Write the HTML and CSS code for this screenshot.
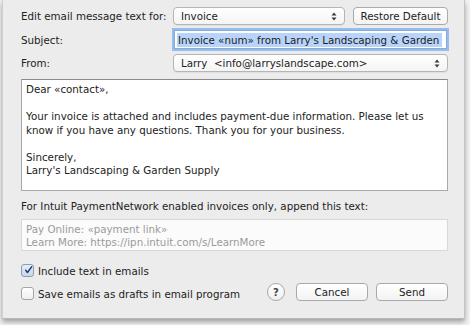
FILE: index.html
```html
<!DOCTYPE html>
<html>
<head>
<meta charset="utf-8">
<link rel="stylesheet" href="styles.css">
</head>
<body>
<div class="sheet">
  <div class="form">
    <div class="row">
      <label class="lbl">Edit email message text for:</label>
      <div class="ctl split">
        <div class="popup short"><span>Invoice</span><svg class="arrows" width="6" height="9" viewBox="0 0 6 9"><path d="M3 0.5 L5.5 3.5 H0.5 Z M3 8.5 L5.5 5.5 H0.5 Z" fill="#3a3a3a"/></svg></div>
        <div class="btn restore">Restore Default</div>
      </div>
    </div>
    <div class="row">
      <label class="lbl">Subject:</label>
      <div class="ctl"><div class="field focus"><span class="sel">Invoice «num» from Larry's Landscaping &amp; Garden</span></div></div>
    </div>
    <div class="row">
      <label class="lbl">From:</label>
      <div class="ctl"><div class="popup"><span>Larry&nbsp; &lt;info@larryslandscape.com&gt;</span><svg class="arrows" width="6" height="9" viewBox="0 0 6 9"><path d="M3 0.5 L5.5 3.5 H0.5 Z M3 8.5 L5.5 5.5 H0.5 Z" fill="#3a3a3a"/></svg></div></div>
    </div>
  </div>
  <div class="body-text">
    <p>Dear «contact»,</p>
    <p>Your invoice is attached and includes payment-due information. Please let us know if you have any questions. Thank you for your business.</p>
    <p>Sincerely,<br>Larry's Landscaping &amp; Garden Supply</p>
  </div>
  <div class="note">For Intuit PaymentNetwork enabled invoices only, append this text:</div>
  <div class="append">Pay Online: «payment link»<br>Learn More: https://ipn.intuit.com/s/LearnMore</div>
  <div class="bottom">
    <div class="checks">
      <div class="check"><span class="box on"><svg width="13" height="12" viewBox="0 0 13 12"><path d="M2.5 6.5 L5 9.5 L11 1.5" fill="none" stroke="#1d3f7a" stroke-width="2.2" stroke-linecap="round" stroke-linejoin="round"/></svg></span>Include text in emails</div>
      <div class="check"><span class="box"></span>Save emails as drafts in email program</div>
    </div>
    <div class="actions">
      <div class="help">?</div>
      <div class="btn wide">Cancel</div>
      <div class="btn wide">Send</div>
    </div>
  </div>
</div>
</body>
</html>
```
FILE: styles.css
```css
html, body { margin: 0; padding: 0; }
body {
  width: 470px; height: 325px; overflow: hidden;
  background: #f3f3f3;
  font-family: "DejaVu Sans", "Liberation Sans", sans-serif;
  font-size: 10.3px;
  color: #222;
}
.sheet {
  box-sizing: border-box;
  width: 463px; height: 319px;
  margin-left: 2px;
  background: #ececec;
  border-left: 1px solid #cfcfcf;
  border-right: 1px solid #c4c4c4;
  border-bottom: 1px solid #b8b8b8;
  box-shadow: 0 3px 5px rgba(0,0,0,0.35);
  padding: 7px 16px 0 18px;
  position: relative;
}
.form { display: flex; flex-direction: column; gap: 5px; }
.row { display: flex; align-items: center; }
.lbl { width: 152px; flex: none; }
.ctl { flex: 1; display: flex; min-width: 0; }
.split { gap: 8px; }
.popup {
  box-sizing: border-box;
  flex: 1; height: 18px;
  display: flex; align-items: center; justify-content: space-between;
  padding: 0 7px 0 7px;
  background: linear-gradient(#ffffff, #f4f4f4);
  border: 1px solid #b5b5b5;
  border-radius: 4px;
  box-shadow: 0 1px 0 rgba(0,0,0,0.05);
}
.popup.short { flex: none; width: 172px; }
.btn {
  box-sizing: border-box;
  height: 18px;
  display: flex; align-items: center; justify-content: center;
  background: linear-gradient(#ffffff, #f3f3f3);
  border: 1px solid #aaa;
  border-radius: 4px;
}
.restore { width: 96px; }
.field {
  box-sizing: border-box;
  flex: 1; height: 19px;
  min-width: 0;
  background: #fff;
  border: 1px solid #8aa9d6;
  box-shadow: 0 0 0 2px #95bdf0;
  display: flex; align-items: center;
  padding-left: 2px;
  margin: 0 1px;
  white-space: nowrap;
  overflow: hidden;
}
.sel { background: #b8d4fb; padding: 1px 3px 1px 1px; }
.body-text {
  box-sizing: border-box;
  margin-top: 7px;
  height: 112px;
  background: #fff;
  border: 1px solid #a9a9a9;
  border-top-color: #8a8a8a;
  padding: 3px 4px;
  line-height: 13.5px;
}
.body-text p { margin: 0 0 13.5px; }
.note { margin-top: 9px; }
.append {
  box-sizing: border-box;
  margin-top: 7px;
  height: 32px;
  background: #fbfbfb;
  border: 1px solid #d8d8d8;
  color: #9a9a9a;
  padding: 3px 4px;
  line-height: 13px;
}
.bottom { display: flex; justify-content: space-between; align-items: flex-end; margin-top: 13px; }
.checks { display: flex; flex-direction: column; gap: 10px; }
.check { display: flex; align-items: center; gap: 4px; }
.box {
  box-sizing: border-box;
  width: 13px; height: 13px;
  border: 1px solid #a5a5a5;
  border-radius: 3px;
  background: linear-gradient(#fff, #f0f0f0);
  display: flex; align-items: center; justify-content: center;
}
.box.on { background: linear-gradient(#e4ecf6, #c9d7ea); border-color: #8a9cb6; }
.box.on svg { margin-left: 2px; margin-top: -2px; }
.actions { display: flex; align-items: center; gap: 8px; margin-bottom: -1px; }
.help {
  box-sizing: border-box;
  width: 18px; height: 18px;
  border-radius: 50%;
  border: 1px solid #a8a8a8;
  background: linear-gradient(#fff, #f0f0f0);
  display: flex; align-items: center; justify-content: center;
  font-weight: bold; font-size: 10px; color: #444;
  margin-right: 3px;
}
.wide { width: 72px; }
```
